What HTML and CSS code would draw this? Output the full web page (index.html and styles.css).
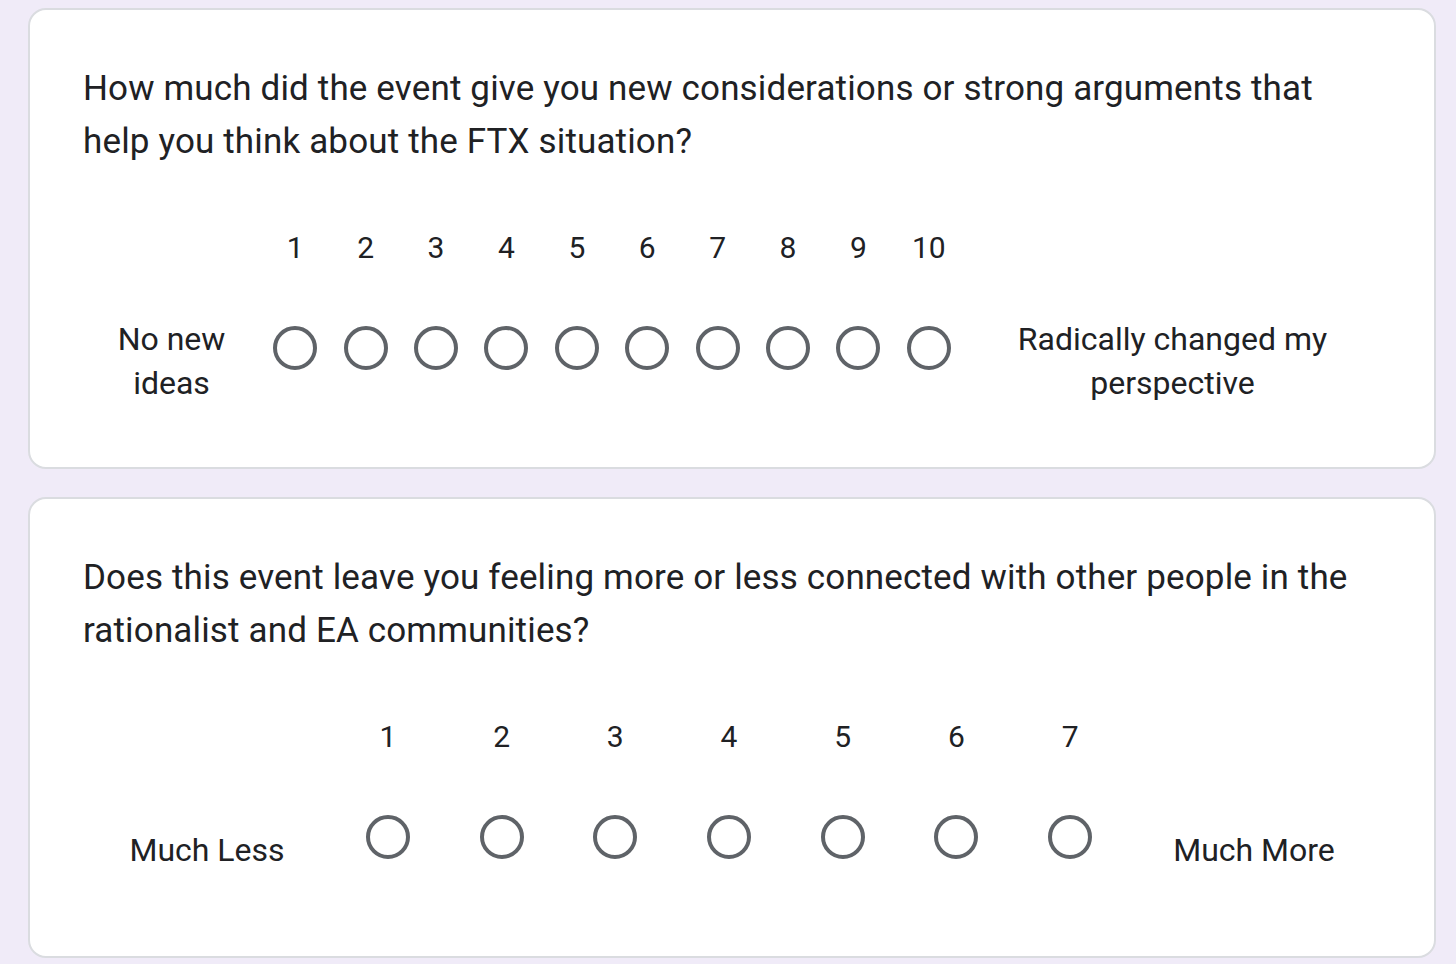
FILE: index.html
```html
<!DOCTYPE html>
<html lang="en">
<head>
<meta charset="utf-8">
<title>Form</title>
<link rel="stylesheet" href="styles.css">
</head>
<body>
<div class="page">
  <section class="card">
    <div class="question">How much did the event give you new considerations or strong arguments that help you think about the FTX situation?</div>
    <div class="scale">
      <div class="scale-label label-a1">No new ideas</div>
      <div class="opts opts-10">
        <div class="opt"><div class="num">1</div><div class="radio-cell"><span class="radio"></span></div></div>
        <div class="opt"><div class="num">2</div><div class="radio-cell"><span class="radio"></span></div></div>
        <div class="opt"><div class="num">3</div><div class="radio-cell"><span class="radio"></span></div></div>
        <div class="opt"><div class="num">4</div><div class="radio-cell"><span class="radio"></span></div></div>
        <div class="opt"><div class="num">5</div><div class="radio-cell"><span class="radio"></span></div></div>
        <div class="opt"><div class="num">6</div><div class="radio-cell"><span class="radio"></span></div></div>
        <div class="opt"><div class="num">7</div><div class="radio-cell"><span class="radio"></span></div></div>
        <div class="opt"><div class="num">8</div><div class="radio-cell"><span class="radio"></span></div></div>
        <div class="opt"><div class="num">9</div><div class="radio-cell"><span class="radio"></span></div></div>
        <div class="opt"><div class="num">10</div><div class="radio-cell"><span class="radio"></span></div></div>
      </div>
      <div class="scale-label label-b1">Radically changed my perspective</div>
    </div>
  </section>
  <section class="card">
    <div class="question">Does this event leave you feeling more or less connected with other people in the rationalist and EA communities?</div>
    <div class="scale">
      <div class="scale-label label-a2">Much Less</div>
      <div class="opts opts-7">
        <div class="opt"><div class="num">1</div><div class="radio-cell"><span class="radio"></span></div></div>
        <div class="opt"><div class="num">2</div><div class="radio-cell"><span class="radio"></span></div></div>
        <div class="opt"><div class="num">3</div><div class="radio-cell"><span class="radio"></span></div></div>
        <div class="opt"><div class="num">4</div><div class="radio-cell"><span class="radio"></span></div></div>
        <div class="opt"><div class="num">5</div><div class="radio-cell"><span class="radio"></span></div></div>
        <div class="opt"><div class="num">6</div><div class="radio-cell"><span class="radio"></span></div></div>
        <div class="opt"><div class="num">7</div><div class="radio-cell"><span class="radio"></span></div></div>
      </div>
      <div class="scale-label label-b2">Much More</div>
    </div>
  </section>
</div>
</body>
</html>
```
FILE: styles.css
```css
* { box-sizing: border-box; }
html, body {
  margin: 0;
  padding: 0;
  background: #f0ebf8;
}
body {
  font-family: Roboto, "Liberation Sans", Arial, sans-serif;
  color: #202124;
}
.page {
  padding: 8px 0 0 28px;
  display: flex;
  flex-direction: column;
  gap: 28px;
}
.card {
  width: 1408px;
  background: #ffffff;
  border: 2px solid #dadce0;
  border-radius: 18px;
  padding: 52px 53px 39px 53px;
}
.question {
  font-size: 35px;
  line-height: 53px;
  letter-spacing: 0.15px;
  margin-bottom: 60px;
}
.scale {
  display: flex;
  height: 200px;
}
.scale-label {
  display: flex;
  align-items: center;
  justify-content: center;
  text-align: center;
  padding-top: 66px;
  font-size: 32px;
  line-height: 44px;
  flex: none;
}
.label-a1 { width: 177px; }
.label-b1 { width: 417px; }
.label-a2 { width: 248px; }
.label-b2 { width: 254px; }
.opts {
  display: flex;
  flex: none;
}
.opts-10 { width: 704px; }
.opts-7 { width: 796px; }
.opt {
  flex: 1 1 0;
  display: flex;
  flex-direction: column;
  align-items: center;
}
.num {
  height: 40px;
  font-size: 30px;
  line-height: 40px;
}
.radio-cell {
  height: 160px;
  display: flex;
  align-items: center;
  justify-content: center;
}
.radio {
  display: block;
  width: 44px;
  height: 44px;
  border: 4px solid #5f6368;
  border-radius: 50%;
}
```
